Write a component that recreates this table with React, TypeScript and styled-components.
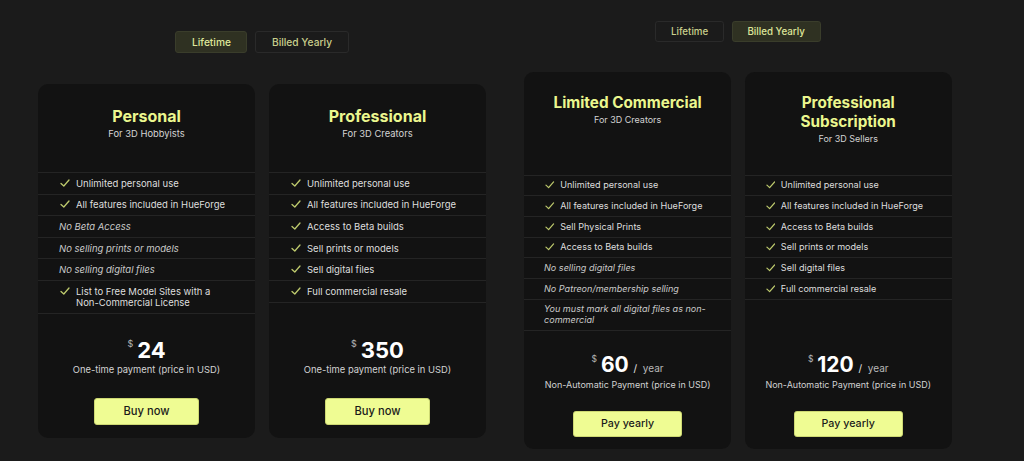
import styled, { createGlobalStyle } from 'styled-components'

type Feature = { text: string; included: boolean }

type Plan = {
  title: string
  subtitle: string
  price: number
  perYear?: boolean
  note: string
  action: string
  features: Feature[]
}

const yes = (text: string): Feature => ({ text, included: true })
const no = (text: string): Feature => ({ text, included: false })

const lifetimePlans: Plan[] = [
  {
    title: 'Personal',
    subtitle: 'For 3D Hobbyists',
    price: 24,
    note: 'One-time payment (price in USD)',
    action: 'Buy now',
    features: [
      yes('Unlimited personal use'),
      yes('All features included in HueForge'),
      no('No Beta Access'),
      no('No selling prints or models'),
      no('No selling digital files'),
      yes('List to Free Model Sites with a Non-Commercial License'),
    ],
  },
  {
    title: 'Professional',
    subtitle: 'For 3D Creators',
    price: 350,
    note: 'One-time payment (price in USD)',
    action: 'Buy now',
    features: [
      yes('Unlimited personal use'),
      yes('All features included in HueForge'),
      yes('Access to Beta builds'),
      yes('Sell prints or models'),
      yes('Sell digital files'),
      yes('Full commercial resale'),
    ],
  },
]

const yearlyPlans: Plan[] = [
  {
    title: 'Limited Commercial',
    subtitle: 'For 3D Creators',
    price: 60,
    perYear: true,
    note: 'Non-Automatic Payment (price in USD)',
    action: 'Pay yearly',
    features: [
      yes('Unlimited personal use'),
      yes('All features included in HueForge'),
      yes('Sell Physical Prints'),
      yes('Access to Beta builds'),
      no('No selling digital files'),
      no('No Patreon/membership selling'),
      no('You must mark all digital files as non-commercial'),
    ],
  },
  {
    title: 'Professional Subscription',
    subtitle: 'For 3D Sellers',
    price: 120,
    perYear: true,
    note: 'Non-Automatic Payment (price in USD)',
    action: 'Pay yearly',
    features: [
      yes('Unlimited personal use'),
      yes('All features included in HueForge'),
      yes('Access to Beta builds'),
      yes('Sell prints or models'),
      yes('Sell digital files'),
      yes('Full commercial resale'),
    ],
  },
]

const CheckIcon = () => (
  <CheckSvg viewBox="0 0 10 10">
    <polyline points="1,5.4 3.8,8 9,2" />
  </CheckSvg>
)

const Toggle = ({ active }: { active: 'lifetime' | 'yearly' }) => (
  <ToggleRow>
    <ToggleButton $active={active === 'lifetime'}>Lifetime</ToggleButton>
    <ToggleButton $active={active === 'yearly'}>Billed Yearly</ToggleButton>
  </ToggleRow>
)

const PlanCard = ({ plan }: { plan: Plan }) => (
  <Card>
    <CardHeader>
      <Title>{plan.title}</Title>
      <Subtitle>{plan.subtitle}</Subtitle>
    </CardHeader>
    <FeatureList>
      {plan.features.map((f) => (
        <FeatureRow key={f.text} $included={f.included}>
          {f.included && <CheckIcon />}
          <span>{f.text}</span>
        </FeatureRow>
      ))}
    </FeatureList>
    <CardFooter>
      <Price>
        <Currency>$</Currency>
        <Amount>{plan.price}</Amount>
        {plan.perYear && (
          <Per>
            <Slash>/</Slash>year
          </Per>
        )}
      </Price>
      <Note>{plan.note}</Note>
      <ActionButton>{plan.action}</ActionButton>
    </CardFooter>
  </Card>
)

const App = () => (
  <>
    <GlobalStyle />
    <Page>
      <Group $top={31}>
        <Toggle active="lifetime" />
        <Cards>
          {lifetimePlans.map((p) => (
            <PlanCard key={p.title} plan={p} />
          ))}
        </Cards>
      </Group>
      <Group $top={22} $zoom={0.955}>
        <Toggle active="yearly" />
        <Cards>
          {yearlyPlans.map((p) => (
            <PlanCard key={p.title} plan={p} />
          ))}
        </Cards>
      </Group>
    </Page>
  </>
)

const GlobalStyle = createGlobalStyle`
  html, body {
    margin: 0;
    background: #1b1b1b;
    font-family: Inter, "Liberation Sans", sans-serif;
    -webkit-font-smoothing: antialiased;
  }
  body {
    height: 461px;
    overflow: hidden;
  }
`

const Page = styled.div`
  display: flex;
  align-items: flex-start;
  gap: 38px;
  padding-left: 38px;
`

const Group = styled.div<{ $top: number; $zoom?: number }>`
  display: flex;
  flex-direction: column;
  gap: 31px;
  padding-top: ${(p) => p.$top}px;
  zoom: ${(p) => p.$zoom ?? 1};
`

const ToggleRow = styled.div`
  display: flex;
  justify-content: center;
  gap: 8px;
`

const ToggleButton = styled.div<{ $active: boolean }>`
  height: 22px;
  box-sizing: border-box;
  display: flex;
  align-items: center;
  padding: 0 15.5px;
  border-radius: 3px;
  font-size: 10.2px;
  font-weight: 500;
  color: ${(p) => (p.$active ? '#dfe79a' : '#c9cf8c')};
  background: ${(p) => (p.$active ? '#2f3122' : 'transparent')};
  border: 1px solid ${(p) => (p.$active ? '#3a3d2b' : '#2a2a2a')};
`

const Cards = styled.div`
  display: grid;
  grid-template-columns: 217px 217px;
  grid-template-rows: auto 1fr auto;
  column-gap: 14px;
`

const Card = styled.div`
  display: grid;
  grid-row: span 3;
  grid-template-rows: subgrid;
  background: #121212;
  border-radius: 10px;
  overflow: hidden;
`

const CardHeader = styled.div`
  text-align: center;
  padding: 22px 12px 31px;
`

const Title = styled.div`
  font-size: 16px;
  line-height: 20px;
  font-weight: 700;
  color: #ebf78e;
`

const Subtitle = styled.div`
  margin-top: 1px;
  font-size: 9.4px;
  line-height: 14px;
  color: #d4d4d4;
`

const FeatureList = styled.ul`
  margin: 0;
  padding: 0;
  list-style: none;
  border-top: 1px solid #242424;
`

const FeatureRow = styled.li<{ $included: boolean }>`
  display: flex;
  align-items: flex-start;
  gap: 6px;
  padding: 4.8px 24px 4.8px 21px;
  border-bottom: 1px solid #242424;
  font-size: 9.5px;
  line-height: 11px;
  font-style: ${(p) => (p.$included ? 'normal' : 'italic')};
  color: ${(p) => (p.$included ? '#dedede' : '#cacaca')};
`

const CheckSvg = styled.svg`
  flex: 0 0 10px;
  width: 10px;
  height: 10px;
  margin-left: 1px;
  fill: none;
  stroke: #bcc86c;
  stroke-width: 1.3;
  stroke-linecap: round;
  stroke-linejoin: round;
`

const CardFooter = styled.div`
  display: flex;
  flex-direction: column;
  align-items: center;
  padding: 24px 12px 13px;
`

const Price = styled.div`
  display: flex;
  align-items: flex-start;
  color: #ffffff;
`

const Currency = styled.span`
  font-size: 9px;
  line-height: 10px;
  margin-top: 1px;
  margin-right: 4px;
  color: #b5b5b5;
`

const Amount = styled.span`
  font-size: 22px;
  line-height: 24px;
  font-weight: 700;
`

const Per = styled.span`
  align-self: flex-end;
  margin-left: 5px;
  font-size: 10.5px;
  line-height: 16px;
  color: #b9b9b9;
`

const Slash = styled.span`
  color: #e6e6e6;
  margin-right: 6px;
`

const Note = styled.div`
  margin-top: 1px;
  font-size: 9.4px;
  line-height: 14px;
  color: #d2d2d2;
`

const ActionButton = styled.button`
  margin-top: 21px;
  height: 27px;
  padding: 0 28px;
  border-radius: 3px;
  border: 1px solid #cdd873;
  background: #effc93;
  color: #1a1a1a;
  font-family: inherit;
  font-size: 11.2px;
  font-weight: 500;
  cursor: pointer;
`

export default App
